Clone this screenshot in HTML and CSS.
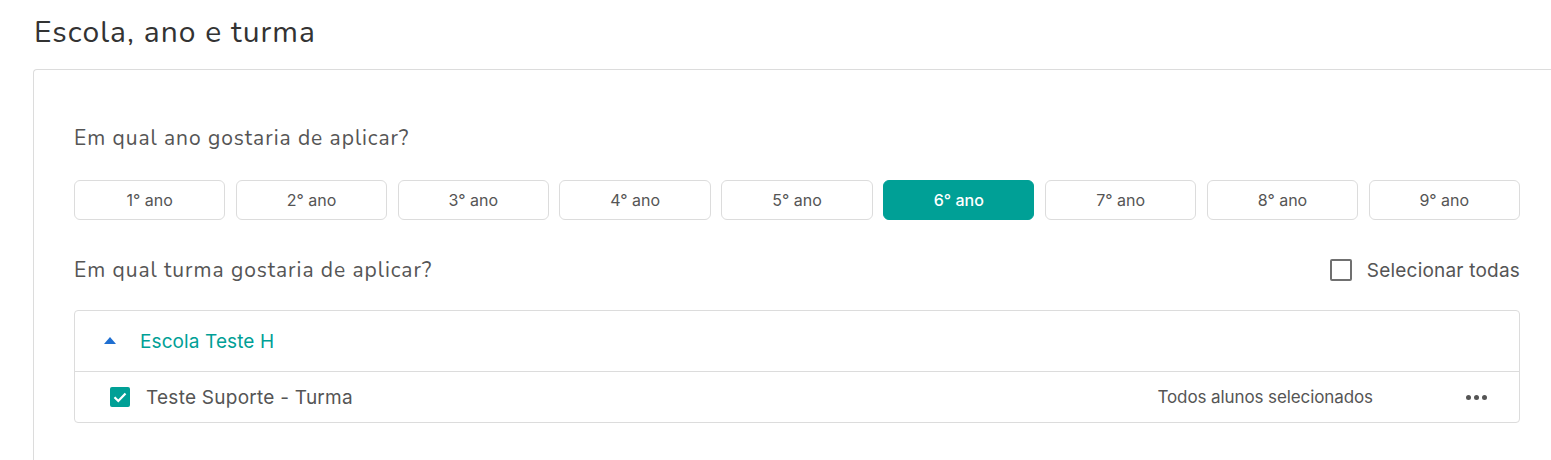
FILE: index.html
```html
<!DOCTYPE html>
<html lang="pt">
<head>
<meta charset="utf-8">
<link rel="stylesheet" href="styles.css">
</head>
<body>
<div class="page">
  <h1 class="title">Escola, ano e turma</h1>
  <section class="card">
    <p class="question">Em qual ano gostaria de aplicar?</p>
    <div class="years">
      <button class="year">1° ano</button>
      <button class="year">2° ano</button>
      <button class="year">3° ano</button>
      <button class="year">4° ano</button>
      <button class="year">5° ano</button>
      <button class="year year--active">6° ano</button>
      <button class="year">7° ano</button>
      <button class="year">8° ano</button>
      <button class="year">9° ano</button>
    </div>
    <div class="class-head">
      <p class="question">Em qual turma gostaria de aplicar?</p>
      <label class="select-all"><span class="box"></span><span>Selecionar todas</span></label>
    </div>
    <div class="accordion">
      <div class="acc-head">
        <svg class="caret" width="12" height="7" viewBox="0 0 12 7"><path d="M0 7 L6 0 L12 7 Z" fill="#1f6fd1"/></svg>
        <span class="school">Escola Teste H</span>
      </div>
      <div class="acc-row">
        <span class="check">
          <svg width="20" height="20" viewBox="0 0 20 20"><rect width="20" height="20" rx="2" fill="#00a096"/><path d="M4.5 10.2 L8.3 14 L15.5 6.5" fill="none" stroke="#fff" stroke-width="2.2"/></svg>
        </span>
        <span class="class-name">Teste Suporte - Turma</span>
        <span class="status">Todos alunos selecionados</span>
        <span class="more"><i></i><i></i><i></i></span>
      </div>
    </div>
  </section>
</div>
</body>
</html>
```
FILE: styles.css
```css
html, body {
  margin: 0;
  padding: 0;
  background: #fff;
  overflow: hidden;
}
.page {
  padding: 14px 0 0 33px;
  font-family: "Nunito", "Open Sans", "Noto Sans", sans-serif;
}
.title {
  margin: 0 0 17px 1px;
  font-size: 30px;
  font-weight: 400;
  line-height: 38px;
  color: #333;
  letter-spacing: 1.05px;
}
.card {
  width: 1446px;
  border: 1px solid #dcdcdc;
  border-right: none;
  border-radius: 4px 0 0 0;
  padding: 54px 40px 40px 40px;
}
.question {
  margin: 0;
  font-size: 21px;
  line-height: 28px;
  color: #555;
  letter-spacing: 0.95px;
}
.years {
  display: flex;
  gap: 10.5px;
  margin-top: 28px;
}
.year {
  flex: 1;
  height: 40px;
  border: 1px solid #dcdcdc;
  border-radius: 6px;
  background: #fff;
  font-family: "Inter", "Roboto", sans-serif;
  font-size: 16px;
  color: #555;
  padding: 0;
}
.year--active {
  background: #00a096;
  border-color: #00a096;
  color: #fff;
  font-weight: 500;
}
.class-head {
  display: flex;
  justify-content: space-between;
  align-items: center;
  margin-top: 36px;
}
.select-all {
  display: flex;
  align-items: center;
  gap: 15px;
  font-family: "Inter", "Roboto", sans-serif;
  font-size: 19px;
  letter-spacing: 0.2px;
  color: #555;
}
.box {
  width: 18px;
  height: 18px;
  border: 2px solid #707070;
  border-radius: 2px;
}
.accordion {
  margin-top: 26px;
  border: 1px solid #dcdcdc;
  border-radius: 4px;
}
.acc-head {
  display: flex;
  align-items: center;
  height: 60px;
  padding-left: 29px;
  border-bottom: 1px solid #dcdcdc;
}
.caret {
  margin-right: 24px;
  margin-top: -2px;
}
.school {
  font-family: "Inter", "Roboto", sans-serif;
  font-size: 19px;
  letter-spacing: 0.1px;
  color: #00a096;
}
.acc-row {
  display: flex;
  align-items: center;
  height: 50px;
  padding-left: 35px;
  padding-right: 32px;
}
.check {
  display: flex;
  margin-right: 16px;
}
.class-name {
  font-family: "Inter", "Roboto", sans-serif;
  font-size: 19px;
  letter-spacing: 0.25px;
  color: #555;
  flex: 1;
}
.status {
  font-family: "Inter", "Roboto", sans-serif;
  font-size: 17px;
  letter-spacing: -0.1px;
  color: #555;
  margin-right: 93px;
}
.more {
  display: flex;
  gap: 3px;
}
.more i {
  width: 5px;
  height: 5px;
  border-radius: 50%;
  background: #555;
}
```
